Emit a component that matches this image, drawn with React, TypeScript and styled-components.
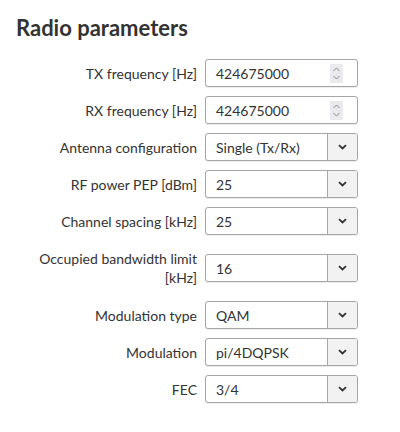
import React from "react"
import styled, { createGlobalStyle } from "styled-components"

const GlobalStyle = createGlobalStyle`
  html, body {
    margin: 0;
    padding: 0;
    background: #ffffff;
  }
  body {
    font-family: Lato, "Open Sans", "Liberation Sans", sans-serif;
    color: #333333;
  }
`

const Page = styled.div`
  width: 400px;
  height: 432px;
  padding: 14px 16px 0 16px;
  box-sizing: border-box;
`

const Title = styled.h2`
  margin: 0 0 17px 0;
  font-size: 22px;
  line-height: 28px;
  font-weight: 700;
  color: #333333;
`

const Form = styled.div`
  display: flex;
  flex-direction: column;
  gap: 9px;
`

const Row = styled.div`
  display: flex;
  align-items: center;
  gap: 8px;
`

const Label = styled.label<{ $wrap?: boolean }>`
  width: 181px;
  flex: none;
  text-align: right;
  font-size: 14px;
  line-height: 19px;
  padding: ${(p) => (p.$wrap ? "5px 0" : "0")};
  color: #333333;
`

const Field = styled.div`
  width: 153px;
  height: 28px;
  box-sizing: border-box;
  display: flex;
  align-items: stretch;
  border: 1px solid #a6a6a6;
  border-radius: 3px;
  background: #ffffff;
  box-shadow: 0 1px 1px rgba(0, 0, 0, 0.08);
  overflow: hidden;
`

const Value = styled.div`
  flex: 1;
  display: flex;
  align-items: center;
  padding-left: 10px;
  font-size: 14px;
  color: #333333;
`

const Spinner = styled.div`
  width: 13px;
  height: 19px;
  align-self: center;
  margin-right: 14px;
  background: #e9e9ee;
  border-radius: 1px;
  display: flex;
  align-items: center;
  justify-content: center;
`

const DropButton = styled.div`
  width: 29px;
  flex: none;
  border-left: 1px solid #a6a6a6;
  background: #f2f2f2;
  display: flex;
  align-items: center;
  justify-content: center;
`

const Chevron = () => (
  <svg width="9" height="6" viewBox="0 0 9 6">
    <path d="M1 1.2 L4.5 4.5 L8 1.2" fill="none" stroke="#333" strokeWidth="1.8" />
  </svg>
)

const SpinIcon = () => (
  <svg width="9" height="15" viewBox="0 0 9 15">
    <path d="M1.5 5 L4.5 2 L7.5 5" fill="none" stroke="#8a8a8a" strokeWidth="1" />
    <path d="M1.5 10 L4.5 13 L7.5 10" fill="none" stroke="#8a8a8a" strokeWidth="1" />
  </svg>
)

type Param = {
  label: string
  value: string
  kind: "number" | "select"
  wrap?: boolean
}

const params: Param[] = [
  { label: "TX frequency [Hz]", value: "424675000", kind: "number" },
  { label: "RX frequency [Hz]", value: "424675000", kind: "number" },
  { label: "Antenna configuration", value: "Single (Tx/Rx)", kind: "select" },
  { label: "RF power PEP [dBm]", value: "25", kind: "select" },
  { label: "Channel spacing [kHz]", value: "25", kind: "select" },
  { label: "Occupied bandwidth limit [kHz]", value: "16", kind: "select", wrap: true },
  { label: "Modulation type", value: "QAM", kind: "select" },
  { label: "Modulation", value: "pi/4DQPSK", kind: "select" },
  { label: "FEC", value: "3/4", kind: "select" },
]

export default function App() {
  return (
    <Page>
      <GlobalStyle />
      <Title>Radio parameters</Title>
      <Form>
        {params.map((p) => (
          <Row key={p.label}>
            <Label $wrap={p.wrap}>{p.label}</Label>
            <Field>
              <Value>{p.value}</Value>
              {p.kind === "number" ? (
                <Spinner>
                  <SpinIcon />
                </Spinner>
              ) : (
                <DropButton>
                  <Chevron />
                </DropButton>
              )}
            </Field>
          </Row>
        ))}
      </Form>
    </Page>
  )
}
